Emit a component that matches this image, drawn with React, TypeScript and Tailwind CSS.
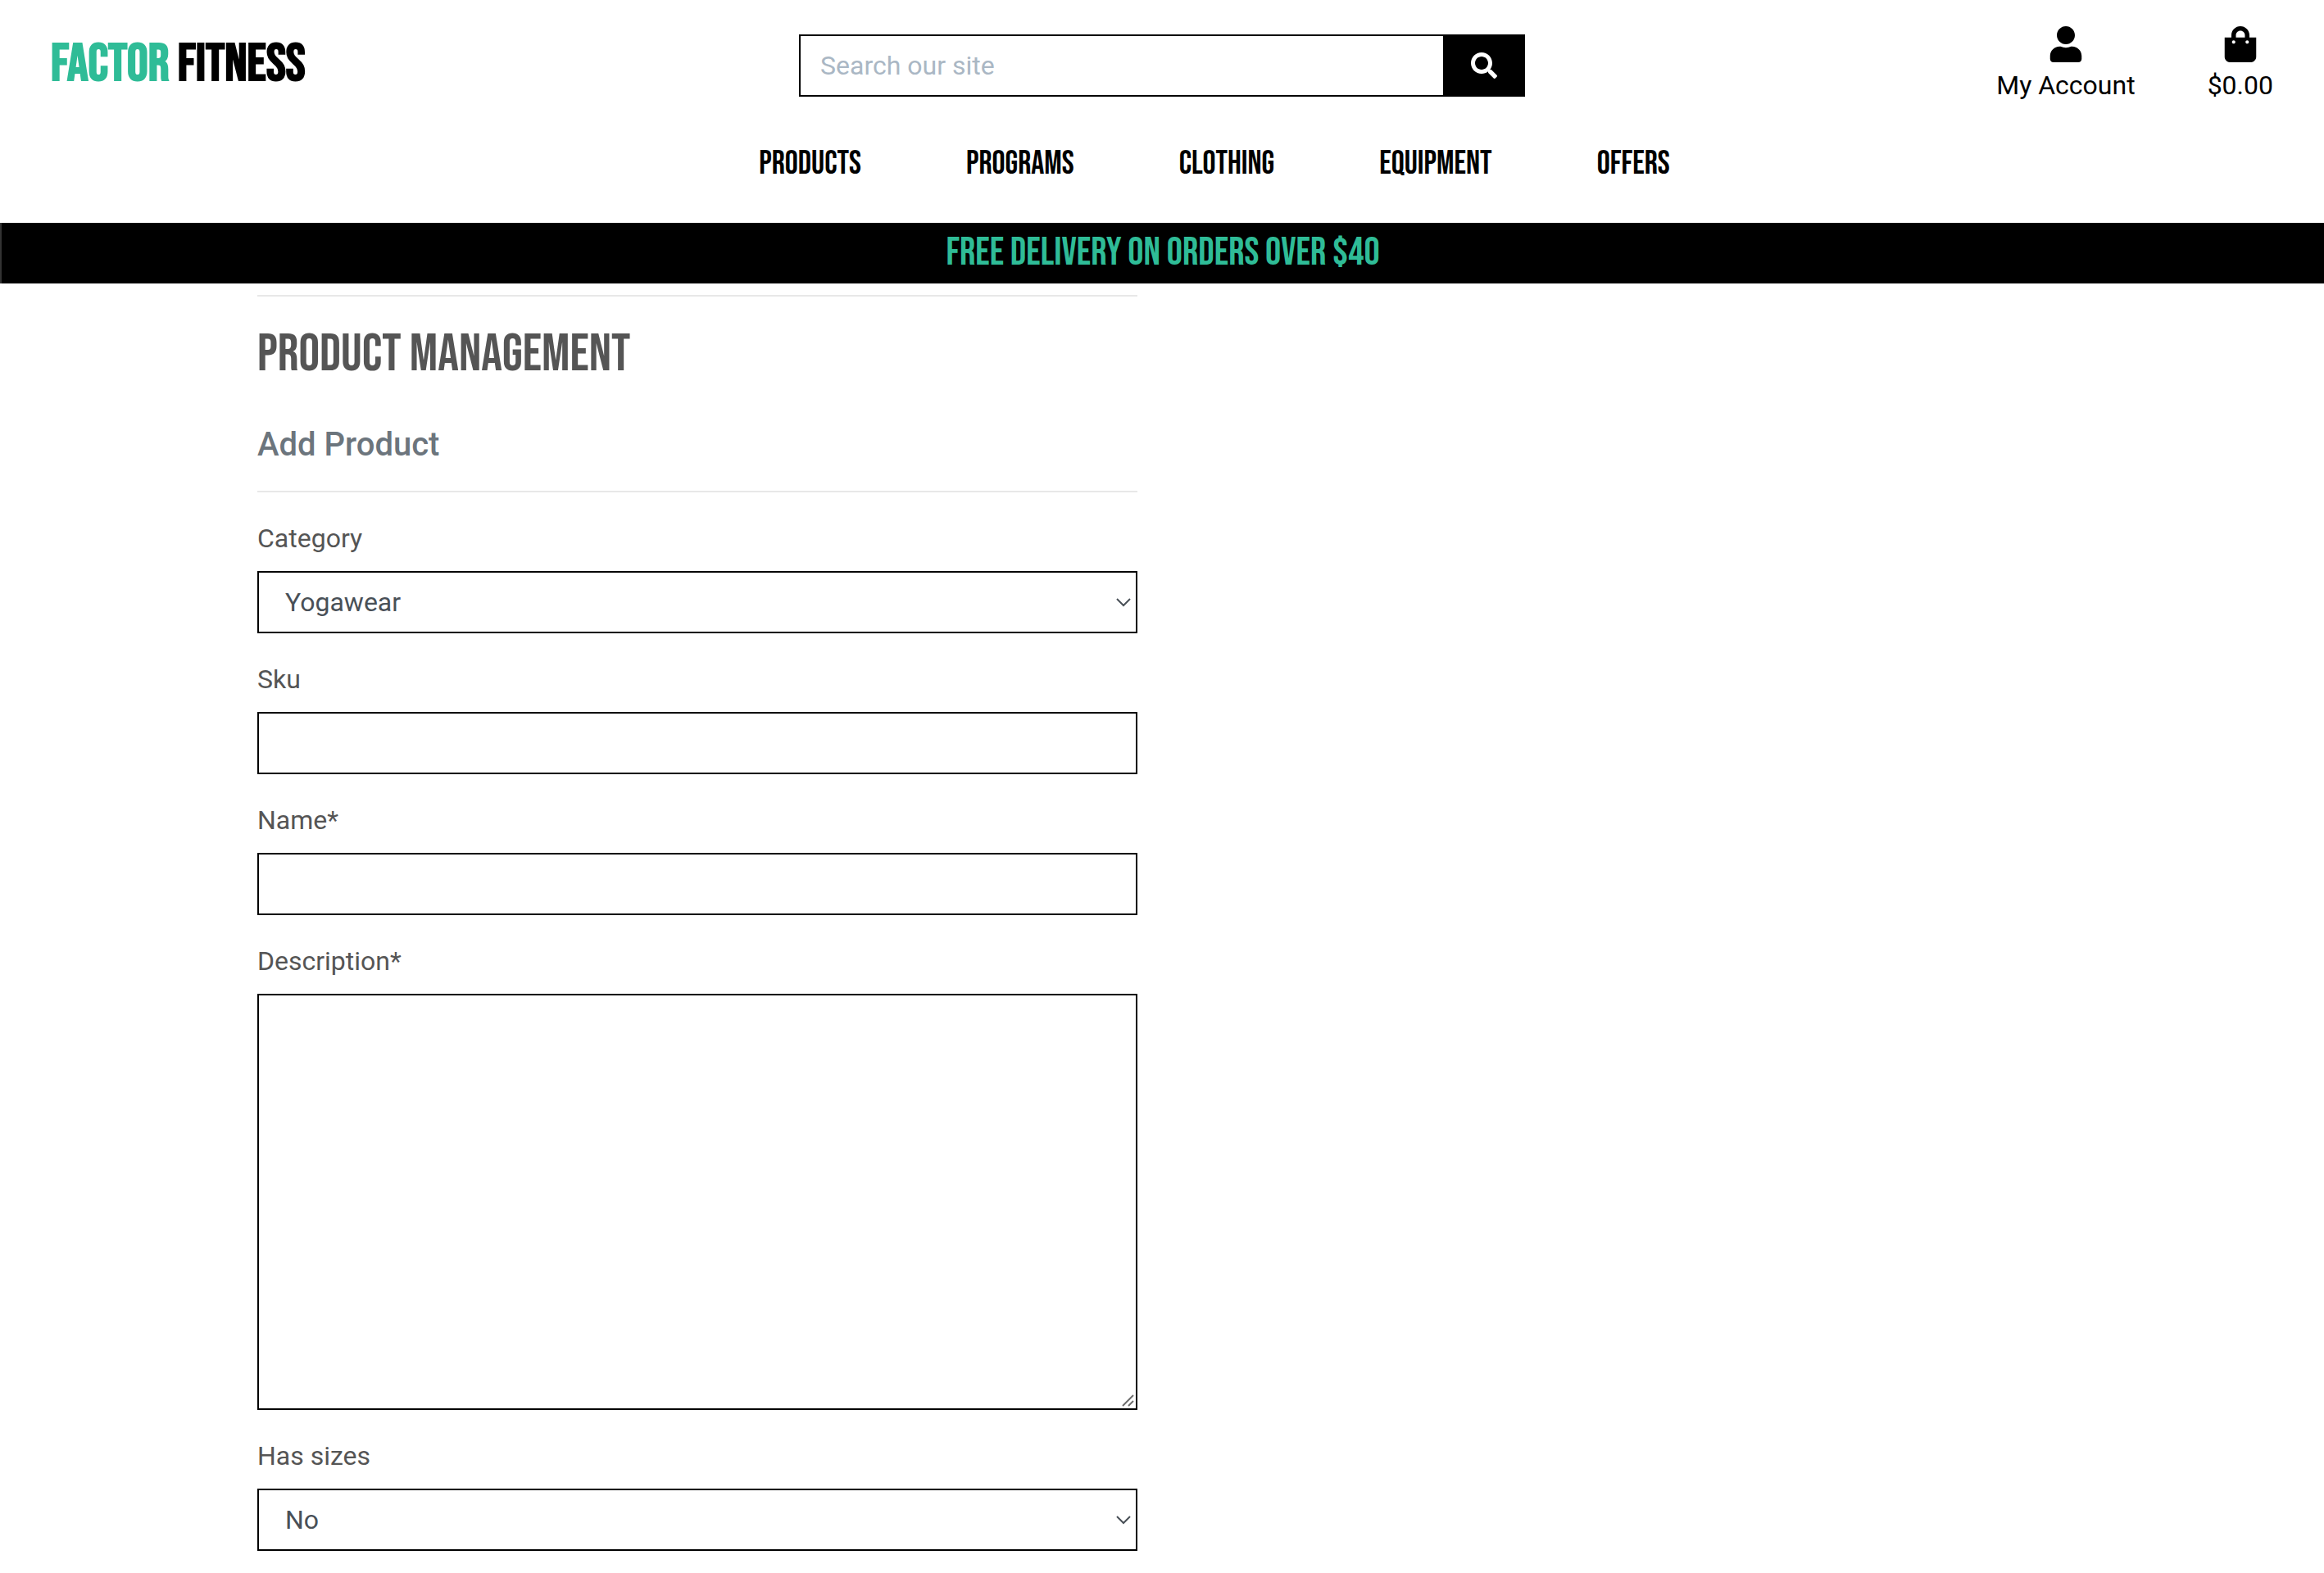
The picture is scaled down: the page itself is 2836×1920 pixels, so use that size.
import type { ReactNode } from 'react';
import { FaSearch, FaShoppingBag, FaUser } from 'react-icons/fa';

const navItems = ['Products', 'Programs', 'Clothing', 'Equipment', 'Offers'];

const control = 'block w-full rounded-none border-2 border-black bg-white text-[32px] leading-[48px] text-[#495057]';

function Field({ id, label, children }: { id: string; label: string; children: ReactNode }) {
  return (
    <div className="mb-8">
      <label htmlFor={id} className="mb-4 block">
        {label}
      </label>
      {children}
    </div>
  );
}

function SelectField({ id, label, options }: { id: string; label: string; options: string[] }) {
  return (
    <Field id={id} label={label}>
      <div className="relative">
        <select id={id} className={`${control} h-[76px] appearance-none px-8`}>
          {options.map((option) => (
            <option key={option}>{option}</option>
          ))}
        </select>
        <svg
          className="pointer-events-none absolute top-8 right-2 h-3 w-5"
          viewBox="0 0 20 12"
          fill="none"
          stroke="#495057"
          strokeWidth="2"
          aria-hidden="true"
        >
          <path d="M3 2l8 8 8-8" />
        </svg>
      </div>
    </Field>
  );
}

function TextField({ id, label }: { id: string; label: string }) {
  return (
    <Field id={id} label={label}>
      <input id={id} type="text" className={`${control} h-[76px] px-6`} />
    </Field>
  );
}

export default function App() {
  return (
    <div className="min-h-screen bg-white font-['Roboto',sans-serif] text-[32px] leading-[48px] text-[#555]">
      <header className="h-[272px] text-black">
        <div className="grid grid-cols-[1fr_886px_1fr] items-start">
          <a href="#" className="pt-10 pl-[62px] font-['Bebas_Neue',sans-serif] text-[64px] leading-[77px] font-bold">
            <span className="text-[#2fbc97]">Factor</span> Fitness
          </a>
          <form className="mt-[42px] flex h-[76px]" onSubmit={(e) => e.preventDefault()}>
            <input
              type="text"
              aria-label="Search our site"
              placeholder="Search our site"
              className="min-w-0 flex-1 rounded-none border-2 border-r-0 border-black bg-white px-6 text-[32px] leading-[48px] placeholder:text-[#aab7c4]"
            />
            <button type="submit" aria-label="Search" className="flex w-[100px] items-center justify-center bg-black text-white">
              <FaSearch size={32} />
            </button>
          </form>
          <div className="flex justify-end gap-[88px] pt-8 pr-[62px]">
            <a href="#" className="flex flex-col items-center">
              <FaUser size={44} />
              <span className="mt-1">My Account</span>
            </a>
            <a href="#" className="flex flex-col items-center">
              <FaShoppingBag size={44} />
              <span className="mt-1">$0.00</span>
            </a>
          </div>
        </div>
        <nav className="mt-12 flex justify-center gap-32 pl-32 font-['Bebas_Neue',sans-serif] text-[40px] leading-[48px]">
          {navItems.map((item) => (
            <a key={item} href="#">
              {item}
            </a>
          ))}
        </nav>
      </header>

      <div className="border-l-2 border-[#333] bg-black pt-2 pb-2 text-center">
        <h4 className="font-['Bebas_Neue',sans-serif] text-[48px] leading-[58px] text-[#2fbc97]">
          Free delivery on orders over $40
        </h4>
      </div>

      <main className="mx-auto grid max-w-[2208px] grid-cols-2 gap-[60px]">
        <div>
          <hr className="mt-[14px] mb-8 border-t-2 border-[#e8e8e8]" />
          <h2 className="font-['Bebas_Neue',sans-serif] text-[64px] leading-[77px]">Product Management</h2>
          <h5 className="mt-12 text-[40px] leading-[48px] font-medium text-[#6c757d]">Add Product</h5>
          <hr className="my-8 border-t-2 border-[#e8e8e8]" />
          <form>
            <SelectField id="category" label="Category" options={['Yogawear']} />
            <TextField id="sku" label="Sku" />
            <TextField id="name" label="Name*" />
            <Field id="description" label="Description*">
              <div className="relative">
                <textarea id="description" className={`${control} h-[508px] resize-none px-6 py-3`} />
                <svg
                  className="pointer-events-none absolute right-1 bottom-1 h-4 w-4"
                  viewBox="0 0 16 16"
                  fill="none"
                  stroke="#6e6e6e"
                  strokeWidth="2"
                  aria-hidden="true"
                >
                  <path d="M2 15L15 2M9 15l6-6" />
                </svg>
              </div>
            </Field>
            <SelectField id="has-sizes" label="Has sizes" options={['No', 'Yes']} />
          </form>
        </div>
      </main>
    </div>
  );
}
